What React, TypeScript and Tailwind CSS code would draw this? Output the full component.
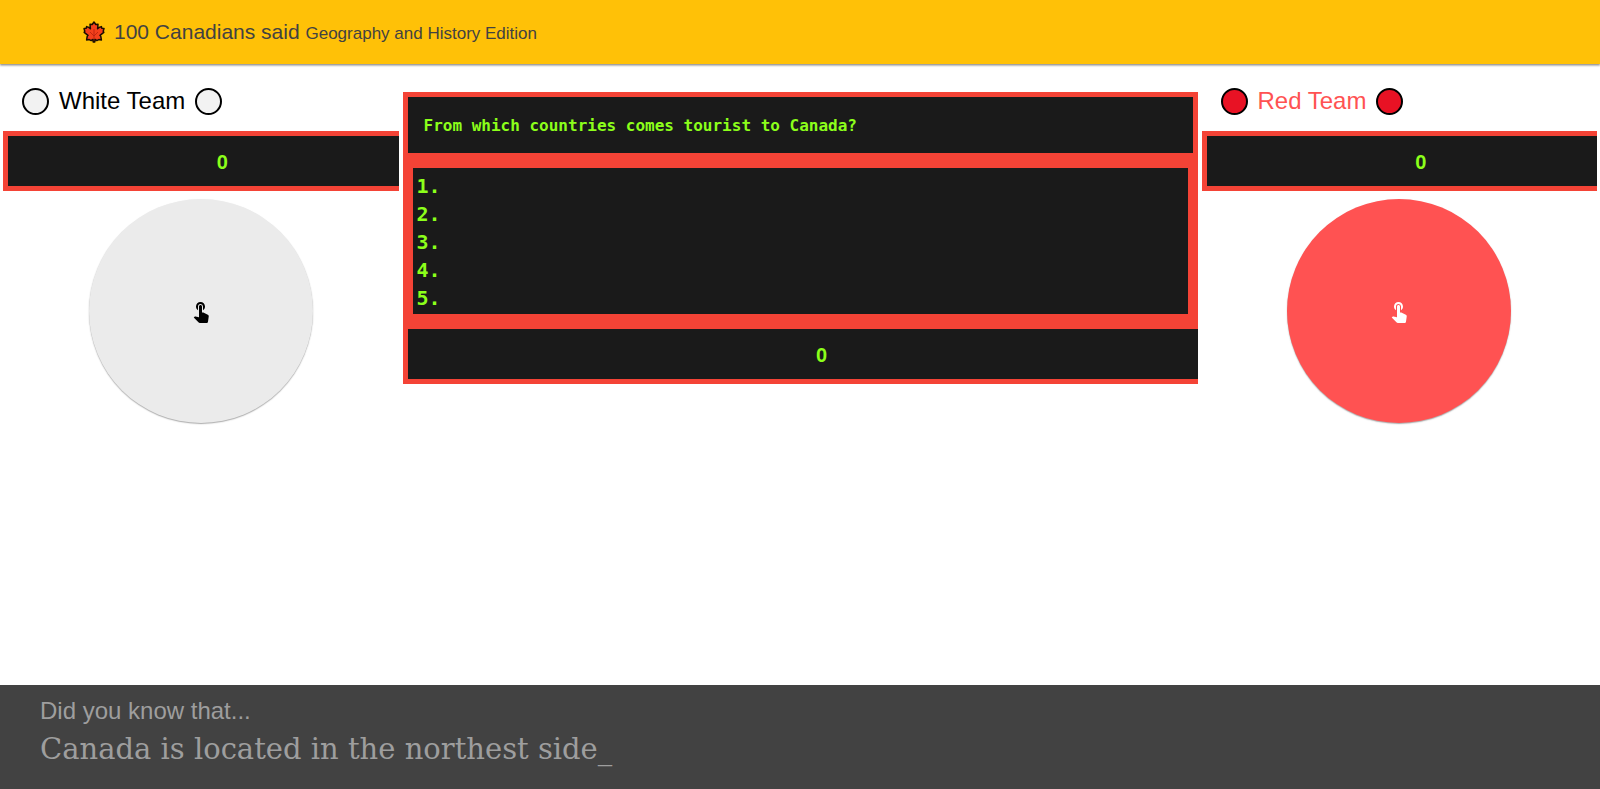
import { MdTouchApp } from "react-icons/md";

const answers = [1, 2, 3, 4, 5];

function MapleLeaf() {
  return (
    <svg viewBox="0 0 22 22" className="h-[22px] w-[22px]" aria-hidden="true">
      <path
        d="M11 1 12.800 3.500 15 3.200 14.600 7.800 16.200 6.400 18.400 5.600 18.800 7.200 21 7.600 20.200 10.200 20.800 11.400 17 14.400 17.800 15.400 18.400 19 15.800 18.600 13.800 19.600 12 18.400 11.800 21H10.200L10 18.400 8.200 19.600 6.200 18.600 3.600 19 4.200 15.400 5 14.400 1.200 11.400 1.800 10.200 1 7.600 3.200 7.200 3.600 5.600 5.800 6.400 7.400 7.800 7 3.200 9.200 3.500Z"
        fill="#f4401c"
        stroke="#1a0d00"
        strokeWidth="1.5"
        strokeLinejoin="round"
      />
      <path
        d="M11 8v10M11 15 7 11M11 15 15 11"
        fill="none"
        stroke="#b5220f"
        strokeWidth="0.8"
      />
    </svg>
  );
}

function Score({ value, label }: { value: number; label: string }) {
  return (
    <div
      aria-label={label}
      className="flex h-[60px] items-center justify-center border-y-5 border-l-5 border-[#f44336] bg-[#1a1a1a] pt-0.5 pl-[38px] font-['Liberation_Sans',Arial,sans-serif] text-xl font-bold text-[#8cff1a]"
    >
      {value}
    </div>
  );
}

type TeamProps = {
  name: string;
  textClass: string;
  dotClass: string;
  buttonClass: string;
};

function Team({ name, textClass, dotClass, buttonClass }: TeamProps) {
  const dot = `h-[27px] w-[27px] rounded-full border-2 border-black ${dotClass}`;
  return (
    <section className="flex flex-col">
      <h2 className={`flex items-center gap-2.5 px-[19px] pt-[23px] pb-4 text-2xl leading-7 ${textClass}`}>
        <span className={dot} />
        {name}
        <span className={dot} />
      </h2>
      <Score value={0} label={`${name} score`} />
      <button
        type="button"
        aria-label={`${name} buzzer`}
        className={`mt-2 flex size-56 items-center justify-center self-center rounded-full shadow-[0_1px_2px_rgba(0,0,0,0.12),0_1px_1px_rgba(0,0,0,0.24)] ${buttonClass}`}
      >
        <MdTouchApp className="size-6" />
      </button>
    </section>
  );
}

export default function App() {
  return (
    <div className="flex min-h-screen flex-col bg-white font-['Liberation_Sans',Arial,sans-serif]">
      <header className="flex h-16 items-center bg-[#ffc107] px-20 text-[#424242] shadow-[0_2px_2px_rgba(0,0,0,0.14),0_1px_2px_rgba(0,0,0,0.4)]">
        <h1 className="flex items-center gap-[9px] pl-[3px]">
          <MapleLeaf />
          <span className="text-[21px]">
            100 Canadians said <small className="text-[17px]">Geography and History Edition</small>
          </span>
        </h1>
      </header>

      <main className="grid flex-1 grid-cols-4 items-start gap-1 px-[3px]">
        <Team name="White Team" textClass="text-black" dotClass="bg-[#f2f2f2]" buttonClass="bg-[#ebebeb] text-black" />

        <section className="col-span-2 mt-7 font-['DejaVu_Sans_Mono',monospace] font-bold text-[#8cff1a]">
          <p className="border-5 border-[#f44336] bg-[#1a1a1a] px-4 pt-[17px] pb-[15px] text-base leading-6">
            From which countries comes tourist to Canada?
          </p>
          <ol className="border-10 border-[#f44336] bg-[#1a1a1a] px-1 pt-1 pb-0.5 text-xl leading-7">
            {answers.map((n) => (
              <li key={n}>{n}.</li>
            ))}
          </ol>
          <Score value={0} label="Round score" />
        </section>

        <Team name="Red Team" textClass="text-[#ff5252]" dotClass="bg-[#e81224]" buttonClass="bg-[#ff5252] text-white" />
      </main>

      <footer className="bg-[#424242] px-10 pt-3 pb-5 text-[#9e9e9e]">
        <h3 className="text-2xl leading-7">Did you know that...</h3>
        <p className="pt-1 font-['DejaVu_Serif',serif] text-[29px] leading-10">
          Canada is located in the northest side_
        </p>
      </footer>
    </div>
  );
}
